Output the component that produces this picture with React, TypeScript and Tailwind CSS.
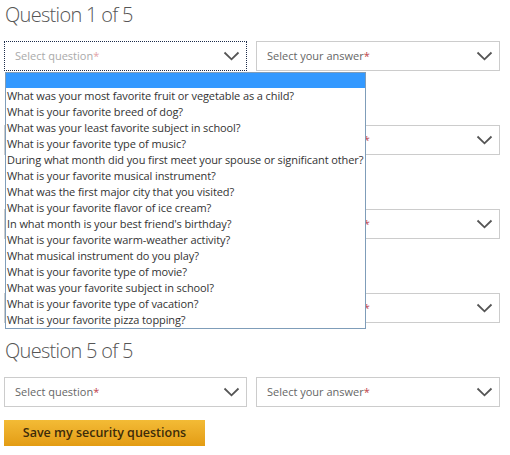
import React from "react";

const options = [
  "What was your most favorite fruit or vegetable as a child?",
  "What is your favorite breed of dog?",
  "What was your least favorite subject in school?",
  "What is your favorite type of music?",
  "During what month did you first meet your spouse or significant other?",
  "What is your favorite musical instrument?",
  "What was the first major city that you visited?",
  "What is your favorite flavor of ice cream?",
  "In what month is your best friend's birthday?",
  "What is your favorite warm-weather activity?",
  "What musical instrument do you play?",
  "What is your favorite type of movie?",
  "What was your favorite subject in school?",
  "What is your favorite type of vacation?",
  "What is your favorite pizza topping?",
];

function Chevron() {
  return (
    <svg width="17" height="10" viewBox="0 0 17 10" className="shrink-0">
      <path d="M1.5 1.5 L8.5 8.3 L15.5 1.5" fill="none" stroke="#555" strokeWidth="1.8" />
    </svg>
  );
}

function SelectBox({ label, width, focused }: { label: string; width: string; focused?: boolean }) {
  return (
    <div
      className={
        "flex h-[30px] items-center justify-between pl-[10px] pr-[6px] bg-white text-[11px] " +
        width +
        (focused ? " border border-dotted border-[#1c2b4a]" : " border border-[#cccccc]")
      }
    >
      <span className={focused ? "text-[#aaaaaa]" : "text-[#666666]"}>
        {label}
        <span className={focused ? "text-[#e3a2a5]" : "text-[#c0444c]"}>*</span>
      </span>
      <Chevron />
    </div>
  );
}

export default function App() {
  return (
    <div className="relative w-[510px] h-[455px] bg-white overflow-hidden font-['Open_Sans',sans-serif]">
      <div className="pl-[4px]">
        {[1, 2, 3, 4, 5].map((n) => (
          <div key={n} className="mb-[13px]">
            <h2 className="pl-[1px] text-[20px] tracking-[-0.7px] leading-[30px] font-light text-[#555555]">
              Question {n} of 5
            </h2>
            <div className="mt-[11px] flex gap-[9px]">
              <SelectBox label="Select question" width="w-[243px]" focused={n === 1} />
              <SelectBox label="Select your answer" width="w-[244px]" />
            </div>
          </div>
        ))}
        <button className="mt-[5px] h-[26px] w-[201px] bg-gradient-to-b from-[#f3bb35] to-[#e39c12] text-[12.5px] font-semibold text-[#3d2c0a] flex items-center justify-center">
          Save my security questions
        </button>
      </div>

      <div className="absolute left-[5px] top-[72px] w-[361px] border border-[#7f9db9] bg-white text-[11px] tracking-[-0.1px] text-[#333333]">
        <div className="h-[15px] bg-[#3399ff]" />
        {options.map((o) => (
          <div key={o} className="h-[16px] leading-[16px] pl-[1px] whitespace-nowrap">
            {o}
          </div>
        ))}
      </div>
    </div>
  );
}
